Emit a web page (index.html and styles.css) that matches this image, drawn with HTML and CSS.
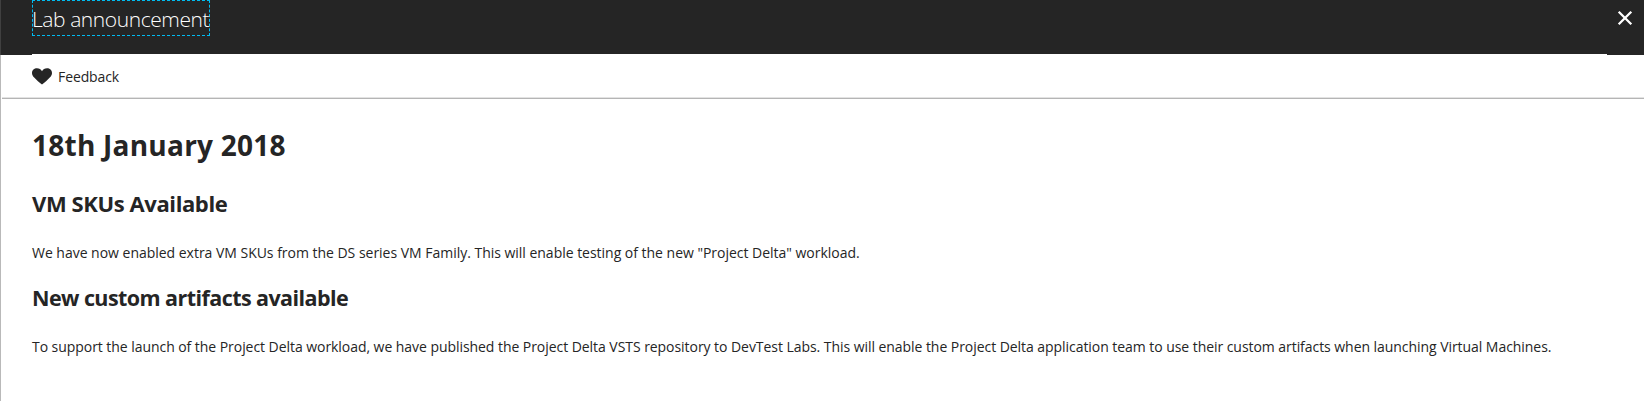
FILE: index.html
```html
<!DOCTYPE html>
<html lang="en">
<head>
<meta charset="utf-8">
<title>Lab announcement</title>
<link rel="stylesheet" href="styles.css">
</head>
<body>
<div class="blade">
  <header class="header">
    <h1 class="title">Lab announcement</h1>
    <button class="close" aria-label="Close">
      <svg width="16" height="16" viewBox="0 0 16 16"><path d="M1.700 1.700 14.300 14.300M14.300 1.700 1.700 14.300" fill="none" stroke="#fff" stroke-width="2.300"/></svg>
    </button>
  </header>
  <nav class="toolbar">
    <svg class="heart" width="20" height="17" viewBox="0 0 20 17"><path d="M10 16.6C7.600 14.600 4.200 12 2.200 9.600C.7 7.900 0 6.600 0 4.900C0 2.200 2.200.200 5 .200C7.200.200 9.100 1.400 10 3.200C10.900 1.400 12.800.200 15 .200C17.800.200 20 2.200 20 4.900C20 6.600 19.300 7.900 17.800 9.600C15.800 12 12.400 14.600 10 16.600Z" fill="#252525"/></svg>
    <span class="label">Feedback</span>
  </nav>
  <main class="content">
    <h2 class="date">18th January 2018</h2>
    <h3 class="subject sku">VM SKUs Available</h3>
    <p class="text">We have now enabled extra VM SKUs from the DS series VM Family. This will enable testing of the new "Project Delta" workload.</p>
    <h3 class="subject artifacts">New custom artifacts available</h3>
    <p class="text support">To support the launch of the Project Delta workload, we have published the Project Delta VSTS repository to DevTest Labs. This will enable the Project Delta application team to use their custom artifacts when launching Virtual Machines.</p>
  </main>
</div>
</body>
</html>
```
FILE: styles.css
```css
* { box-sizing: border-box; }
body {
  margin: 0;
  background: #fff;
  color: #252525;
  font-family: "Open Sans", "Noto Sans", sans-serif;
}
.blade { height: 401px; display: flex; flex-direction: column; overflow: hidden; }
.header {
  height: 55px;
  flex: none;
  display: flex;
  justify-content: space-between;
  align-items: flex-start;
  padding: 0 11px 0 31px;
  background: linear-gradient(#fff, #fff) 31px 54px / 1579px 1px no-repeat, #252525;
  background-size: 1575px 1px, auto;
  border-left: 1px solid #404040;
}
.title {
  margin: 0;
  width: 178px;
  height: 36px;
  border: 1px dashed #00bcf2;
  font-size: 21px;
  line-height: 36px;
  font-weight: 300;
  color: #fff;
  white-space: nowrap;
  letter-spacing: -0.42px;
  text-indent: -1px;
}
.close { display: block; margin-top: 10px; padding: 0; border: 0; background: none; height: 16px; }
.close svg { display: block; }
.toolbar {
  height: 44px;
  flex: none;
  display: flex;
  align-items: center;
  gap: 6px;
  padding-left: 31px;
  border-left: 1px solid #b9b9b9;
  background: linear-gradient(#e3e3e3 50%, #b5b5b5 50%) 1px 42px / 100% 2px no-repeat;
}
.heart { display: block; margin-bottom: 1px; }
.label { font-size: 14px; line-height: 20px; letter-spacing: -0.1px; }
.content { flex: 1; padding: 25px 0 0 31px; border-left: 1px solid #b9b9b9; white-space: nowrap; }
.date { margin: 0 0 16px; font-size: 28px; line-height: 42px; font-weight: 700; letter-spacing: 0.24px; }
.subject { margin: 0 0 18px; font-size: 22px; line-height: 43px; font-weight: 700; }
.sku { letter-spacing: -0.4px; }
.artifacts { font-size: 21.5px; letter-spacing: -0.57px; }
.text { margin: 0 0 13px; font-size: 14px; line-height: 20px; letter-spacing: -0.02px; }
.support { letter-spacing: -0.053px; }
```
